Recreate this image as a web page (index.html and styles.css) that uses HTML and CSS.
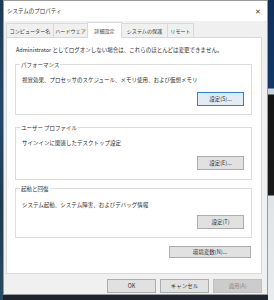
FILE: index.html
```html
<!DOCTYPE html>
<html lang="ja">
<head>
<meta charset="utf-8">
<link rel="stylesheet" href="styles.css">
</head>
<body>
<div class="desktop">
  <div class="left-strip"></div>
  <div class="dialog">
    <div class="titlebar">
      <span class="title">システムのプロパティ</span>
      <span class="close">✕</span>
    </div>
    <div class="body">
      <div class="tabs">
        <div class="tab t1">コンピューター名</div>
        <div class="tab t2">ハードウェア</div>
        <div class="tab t3 selected">詳細設定</div>
        <div class="tab t4">システムの保護</div>
        <div class="tab t5">リモート</div>
      </div>
      <div class="panel">
        <div class="note">Administrator としてログオンしない場合は、これらのほとんどは変更できません。</div>
        <div class="group g1">
          <div class="group-title">パフォーマンス</div>
          <div class="group-text">視覚効果、プロセッサのスケジュール、メモリ使用、および仮想メモリ</div>
          <div class="btn-row"><div class="btn focused">設定(S)...</div></div>
        </div>
        <div class="group g2">
          <div class="group-title">ユーザー プロファイル</div>
          <div class="group-text">サインインに関連したデスクトップ設定</div>
          <div class="btn-row"><div class="btn">設定(E)...</div></div>
        </div>
        <div class="group g3">
          <div class="group-title">起動と回復</div>
          <div class="group-text">システム起動、システム障害、およびデバッグ情報</div>
          <div class="btn-row"><div class="btn">設定(T)</div></div>
        </div>
        <div class="env-row"><div class="btn env">環境変数(N)...</div></div>
      </div>
      <div class="footer">
        <div class="btn foot">OK</div>
        <div class="btn foot">キャンセル</div>
        <div class="btn foot disabled">適用(A)</div>
      </div>
    </div>
  </div>
  <div class="right-strip"></div>
</div>
</body>
</html>
```

FILE: styles.css
```css
* { box-sizing: border-box; }
html, body { margin: 0; padding: 0; }
body {
  width: 274px;
  height: 300px;
  overflow: hidden;
  background: #1c2530;
  font-family: "Noto Sans CJK JP", "Noto Sans", sans-serif;
  font-size: 5.5px;
  color: #2a2a2a;
}
.desktop {
  display: flex;
  height: 300px;
}
.left-strip {
  width: 3px;
  background: linear-gradient(#1d3b52, #24486a 40%, #1e3a4e 70%, #2a4c60);
}
.dialog {
  width: 265px;
  height: 295px;
  border: 1px solid #9a9a9a;
  background: #f0f0f0;
  display: flex;
  flex-direction: column;
}
.right-strip {
  flex: 1;
  background: linear-gradient(#10305a 0, #123766 88px, #c9d3dc 89px, #c9d3dc 94px, #141414 95px, #1a1a1a 195px, #dfe3e6 196px, #e9ecee 300px);
}
.titlebar {
  height: 20px;
  background: #ffffff;
  display: flex;
  align-items: center;
  justify-content: space-between;
  padding: 0 6px 0 3px;
}
.title { font-size: 5.5px; color: #333; }
.close { font-size: 6.5px; color: #444; }
.body {
  flex: 1;
  display: flex;
  flex-direction: column;
  padding: 0 5px 0 2px;
}
.tabs {
  display: flex;
  align-items: flex-end;
  height: 16px;
}
.tab {
  height: 14px;
  display: flex;
  align-items: center;
  justify-content: center;
  border: 1px solid #d9d9d9;
  border-bottom: none;
  background: #f0f0f0;
  margin-right: -1px;
  color: #333;
  font-size: 5.1px;
  white-space: nowrap;
}
.t1 { width: 48px; }
.t2 { width: 35px; }
.t3 { width: 35px; }
.t4 { width: 47px; }
.t5 { width: 27px; }
.tab.selected {
  height: 16px;
  background: #ffffff;
  position: relative;
  z-index: 1;
  margin-bottom: -1px;
  padding-bottom: 1px;
}
.panel {
  height: 237px;
  background: #ffffff;
  border: 1px solid #d9d9d9;
  padding: 8px 9px 0 8px;
  display: flex;
  flex-direction: column;
}
.note {
  line-height: 8px;
  height: 8px;
  padding-left: 1px;
  white-space: nowrap;
}
.group {
  position: relative;
  border: 1px solid #dcdcdc;
  padding: 11px 7px 0 6px;
}
.g1 { margin-top: 10px; height: 51px; }
.g2 { margin-top: 12px; height: 53px; }
.g3 { margin-top: 8px; height: 50px; }
.g3 .group-text { margin-top: 1px; }
.group-title {
  position: absolute;
  top: -4px;
  left: 4px;
  line-height: 8px;
  padding: 0 1px;
  background: #ffffff;
  color: #333;
}
.group-text {
  line-height: 8px;
  white-space: nowrap;
}
.btn-row {
  display: flex;
  justify-content: flex-end;
  margin-top: 8px;
}
.g2 .btn-row { margin-top: 9px; }
.g3 .btn-row { margin-top: 6px; }
.btn {
  width: 47px;
  height: 14px;
  display: flex;
  align-items: center;
  justify-content: center;
  background: #e1e1e1;
  border: 1px solid #adadad;
  color: #333;
}
.btn.focused {
  border-color: #2b85d6;
  background: #e3ecf4;
}
.env-row {
  display: flex;
  justify-content: flex-end;
  margin-top: 8px;
  padding-right: 1px;
}
.btn.env {
  width: 82px;
  height: 12px;
}
.footer {
  display: flex;
  justify-content: flex-end;
  gap: 4px;
  margin-top: 5px;
}
.btn.foot {
  width: 49px;
  height: 14px;
}
.btn.disabled {
  background: #cccccc;
  border-color: #bfbfbf;
  color: #8a8a8a;
}
```
